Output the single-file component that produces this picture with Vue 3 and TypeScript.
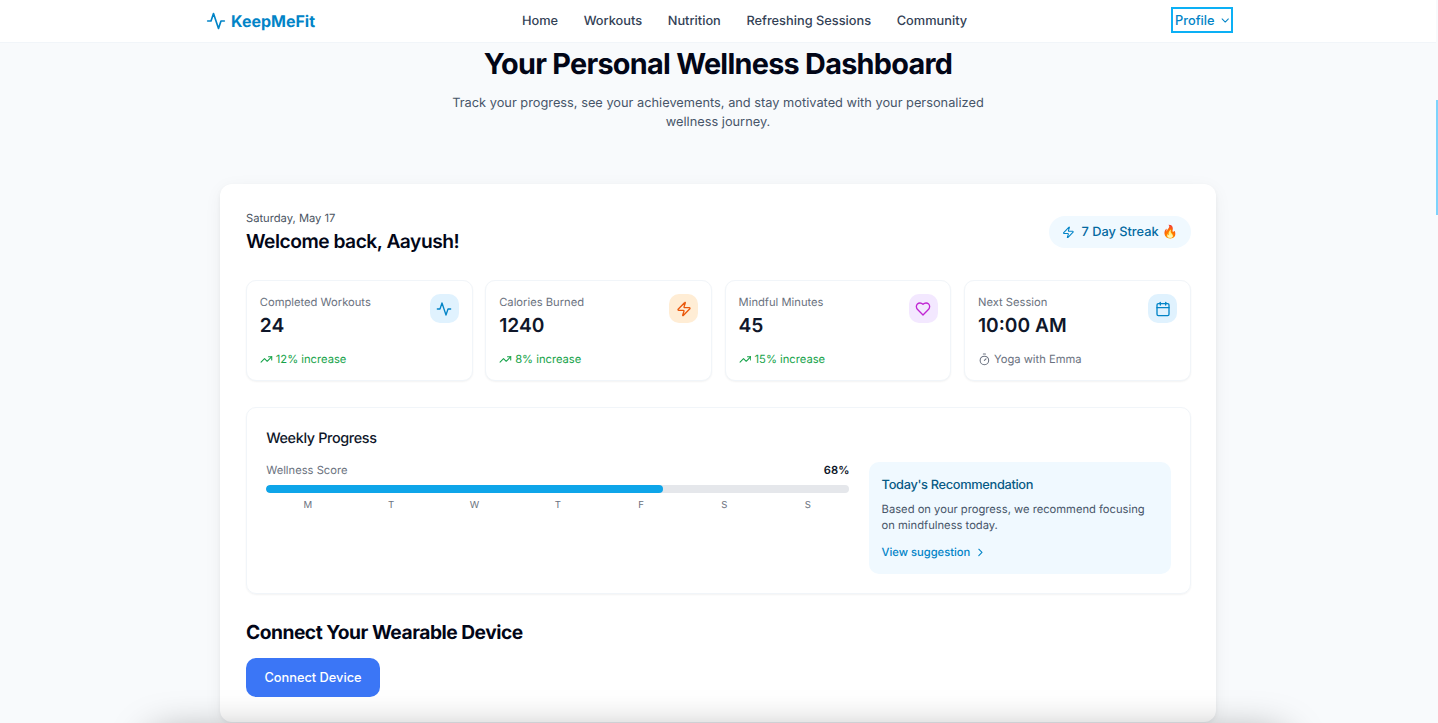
<template>
  <div class="page">
    <header class="nav">
      <div class="nav-inner">
        <a class="logo">
          <svg class="logo-icon" viewBox="0 0 24 24" fill="none" stroke="currentColor" stroke-width="2" stroke-linecap="round" stroke-linejoin="round">
            <path d="M22 12h-4l-3 9L9 3l-3 9H2" />
          </svg>
          KeepMeFit
        </a>
        <nav class="links">
          <a v-for="link in links" :key="link">{{ link }}</a>
        </nav>
        <button class="profile">
          Profile
          <svg viewBox="0 0 24 24" fill="none" stroke="currentColor" stroke-width="2" stroke-linecap="round" stroke-linejoin="round">
            <path d="m6 9 6 6 6-6" />
          </svg>
        </button>
      </div>
    </header>

    <section class="hero">
      <h1>Your Personal Wellness Dashboard</h1>
      <p>Track your progress, see your achievements, and stay motivated with your personalized wellness journey.</p>
    </section>

    <main class="card">
      <div class="welcome">
        <div>
          <div class="date">Saturday, May 17</div>
          <h2>Welcome back, Aayush!</h2>
        </div>
        <div class="streak">
          <svg viewBox="0 0 24 24" fill="none" stroke="currentColor" stroke-width="2" stroke-linecap="round" stroke-linejoin="round">
            <path d="M4 14a1 1 0 0 1-.78-1.63l9.9-10.2a.5.5 0 0 1 .86.46l-1.92 6.02A1 1 0 0 0 13 10h7a1 1 0 0 1 .78 1.63l-9.9 10.2a.5.5 0 0 1-.86-.46l1.92-6.02A1 1 0 0 0 11 14z" />
          </svg>
          <span>7 Day Streak 🔥</span>
        </div>
      </div>

      <div class="stats">
        <div v-for="stat in stats" :key="stat.label" class="stat">
          <div class="stat-top">
            <div>
              <div class="stat-label">{{ stat.label }}</div>
              <div class="stat-value">{{ stat.value }}</div>
            </div>
            <div class="stat-icon" :class="stat.tone">
              <svg viewBox="0 0 24 24" fill="none" stroke="currentColor" stroke-width="2" stroke-linecap="round" stroke-linejoin="round">
                <path v-for="d in stat.icon" :key="d" :d="d" />
              </svg>
            </div>
          </div>
          <div class="stat-foot" :class="{ up: stat.up }">
            <svg v-if="stat.up" viewBox="0 0 24 24" fill="none" stroke="currentColor" stroke-width="2" stroke-linecap="round" stroke-linejoin="round">
              <path d="M22 7 13.5 15.5l-5-5L2 17" />
              <path d="M16 7h6v6" />
            </svg>
            <svg v-else viewBox="0 0 24 24" fill="none" stroke="currentColor" stroke-width="2" stroke-linecap="round" stroke-linejoin="round">
              <path d="M10 2h4" />
              <path d="m12 14 3-3" />
              <circle cx="12" cy="14" r="8" />
            </svg>
            {{ stat.foot }}
          </div>
        </div>
      </div>

      <div class="progress-card">
        <h3>Weekly Progress</h3>
        <div class="progress-body">
          <div class="score">
            <div class="score-head">
              <span>Wellness Score</span>
              <strong>{{ score }}%</strong>
            </div>
            <div class="track">
              <div class="fill" :style="{ width: score + '%' }"></div>
            </div>
            <div class="days">
              <span v-for="(day, i) in days" :key="i">{{ day }}</span>
            </div>
          </div>
          <aside class="rec">
            <h4>Today's Recommendation</h4>
            <p>Based on your progress, we recommend focusing on mindfulness today.</p>
            <a>
              View suggestion
              <svg viewBox="0 0 24 24" fill="none" stroke="currentColor" stroke-width="2" stroke-linecap="round" stroke-linejoin="round">
                <path d="m9 18 6-6-6-6" />
              </svg>
            </a>
          </aside>
        </div>
      </div>

      <h2 class="connect-title">Connect Your Wearable Device</h2>
      <button class="connect">Connect Device</button>
    </main>

    <!-- next section sits below the fold, only its shadow shows -->
    <div class="fold-shadow"></div>
    <div class="scroll-thumb"></div>
  </div>
</template>

<script setup lang="ts">
interface Stat {
  label: string;
  value: string;
  tone: string;
  icon: string[];
  foot: string;
  up: boolean;
}

const links = ['Home', 'Workouts', 'Nutrition', 'Refreshing Sessions', 'Community'];
const days = ['M', 'T', 'W', 'T', 'F', 'S', 'S'];
const score = 68;

const bolt = 'M4 14a1 1 0 0 1-.78-1.63l9.9-10.2a.5.5 0 0 1 .86.46l-1.92 6.02A1 1 0 0 0 13 10h7a1 1 0 0 1 .78 1.63l-9.9 10.2a.5.5 0 0 1-.86-.46l1.92-6.02A1 1 0 0 0 11 14z';
const heart = 'M19 14c1.49-1.46 3-3.21 3-5.5A5.5 5.5 0 0 0 16.5 3c-1.76 0-3 .5-4.5 2-1.5-1.5-2.74-2-4.5-2A5.5 5.5 0 0 0 2 8.5c0 2.3 1.5 4.05 3 5.5l7 7Z';

const stats: Stat[] = [
  { label: 'Completed Workouts', value: '24', tone: 'sky', icon: ['M22 12h-4l-3 9L9 3l-3 9H2'], foot: '12% increase', up: true },
  { label: 'Calories Burned', value: '1240', tone: 'orange', icon: [bolt], foot: '8% increase', up: true },
  { label: 'Mindful Minutes', value: '45', tone: 'purple', icon: [heart], foot: '15% increase', up: true },
  {
    label: 'Next Session',
    value: '10:00 AM',
    tone: 'sky',
    icon: ['M8 2v4', 'M16 2v4', 'M5 4h14a2 2 0 0 1 2 2v14a2 2 0 0 1-2 2H5a2 2 0 0 1-2-2V6a2 2 0 0 1 2-2Z', 'M3 10h18'],
    foot: 'Yoga with Emma',
    up: false,
  },
];
</script>

<style>
html,
body {
  margin: 0;
  height: 723px;
  overflow: hidden;
  background: #f8fafc;
}
</style>

<style scoped>
.page {
  position: relative;
  box-sizing: border-box;
  height: 723px;
  padding-right: 2px;
  overflow: hidden;
  background: #f8fafc;
  font-family: Inter, "Liberation Sans", sans-serif;
  text-rendering: geometricPrecision;
  color: #0f172a;
}

.nav {
  height: 42px;
  background: #fff;
  border-bottom: 1px solid #f1f5f9;
}

.nav-inner {
  width: 1024px;
  height: 100%;
  margin: 0 auto;
  display: flex;
  align-items: center;
  justify-content: space-between;
}

.logo {
  display: flex;
  align-items: center;
  gap: 5px;
  color: #0284c7;
  font-size: 16px;
  font-weight: 700;
}

.logo-icon {
  width: 20px;
  height: 20px;
}

.links {
  display: flex;
  gap: 25.6px;
  font-size: 12.8px;
  font-weight: 500;
  color: #334155;
  margin-left: 1px;
}

.profile {
  display: flex;
  align-items: center;
  gap: 4px;
  width: 58px;
  height: 22px;
  margin: 0 -1px 2px 0;
  padding: 0 0 0 2px;
  background: #fff;
  border: none;
  outline: 2px solid #0cb0f5;
  color: #0284c7;
  font: 500 12.8px Inter, "Liberation Sans", sans-serif;
}

.profile svg {
  width: 13px;
  height: 13px;
}

.hero {
  padding-top: 1px;
  text-align: center;
}

.hero h1 {
  margin: 0;
  font-size: 28.8px;
  line-height: 40px;
  font-weight: 700;
  letter-spacing: -0.72px;
  color: #020617;
}

.hero p {
  width: 560px;
  margin: 10px auto 0;
  font-size: 12.8px;
  line-height: 19.2px;
  color: #475569;
}

.card {
  box-sizing: border-box;
  width: 996.8px;
  height: 538px;
  margin: 52px auto 0;
  padding: 26px 25.6px 26px 26.4px;
  background: #fff;
  border-radius: 12px;
  box-shadow: 0 2px 4px rgba(15, 23, 42, 0.05), 0 4px 18px rgba(15, 23, 42, 0.05);
}

.welcome {
  display: flex;
  justify-content: space-between;
  align-items: center;
}

.date {
  font-size: 11.2px;
  line-height: 17px;
  color: #4b5563;
}

h2 {
  margin: 0;
  font-size: 19.2px;
  line-height: 28px;
  font-weight: 600;
  letter-spacing: -0.48px;
  color: #020617;
}

.streak {
  display: flex;
  align-items: center;
  gap: 7px;
  height: 32px;
  margin-top: -2px;
  padding: 0 12.8px;
  border-radius: 16px;
  background: #f0f9ff;
  color: #0369a1;
  font-size: 12.8px;
  font-weight: 500;
}

.streak span {
  position: relative;
  top: 0.5px;
}

.streak svg {
  width: 12.8px;
  height: 12.8px;
  color: #0284c7;
}

.stats {
  display: grid;
  grid-template-columns: repeat(4, 1fr);
  gap: 12.8px;
  margin-top: 25px;
}

.stat {
  box-sizing: border-box;
  height: 101px;
  padding: 12.8px;
  background: #fff;
  border: 1px solid #f1f5f9;
  border-radius: 10px;
  box-shadow: 0 1px 2px rgba(0, 0, 0, 0.05);
}

.stat-top {
  display: flex;
  justify-content: space-between;
  align-items: flex-start;
}

.stat-label {
  font-size: 11.2px;
  line-height: 16px;
  color: #6b7280;
}

.stat-value {
  font-size: 19.2px;
  line-height: 30px;
  font-weight: 600;
  color: #0f172a;
}

.stat-icon {
  width: 29px;
  height: 29px;
  border-radius: 10px;
  display: flex;
  align-items: center;
  justify-content: center;
}

.stat-icon svg {
  width: 16px;
  height: 16px;
}

.sky {
  background: #e0f2fe;
  color: #0284c7;
}

.orange {
  background: #ffedd5;
  color: #ea580c;
}

.purple {
  background: #f3e8ff;
  color: #c026d3;
}

.stat-foot {
  display: flex;
  align-items: center;
  gap: 3.2px;
  margin-top: 11px;
  font-size: 11.2px;
  line-height: 16px;
  color: #6b7280;
}

.stat-foot.up {
  color: #16a34a;
}

.stat-foot svg {
  width: 12.8px;
  height: 12.8px;
}

.progress-card {
  box-sizing: border-box;
  height: 187px;
  margin-top: 26px;
  padding: 21px 19.2px 19px;
  border: 1px solid #f1f5f9;
  border-radius: 10px;
  box-shadow: 0 1px 2px rgba(0, 0, 0, 0.05);
}

h3 {
  margin: 0;
  font-size: 14.4px;
  line-height: 20px;
  font-weight: 500;
  letter-spacing: -0.36px;
  color: #0f172a;
}

.progress-body {
  display: flex;
  gap: 19.2px;
  margin-top: 13px;
}

.score {
  flex: 1;
}

.score-head {
  display: flex;
  justify-content: space-between;
  font-size: 11.2px;
  line-height: 16px;
  color: #6b7280;
}

.score-head strong {
  font-weight: 600;
  color: #0f172a;
}

.track {
  height: 8px;
  margin-top: 7px;
  border-radius: 4px;
  background: #e5e7eb;
  overflow: hidden;
}

.fill {
  height: 100%;
  border-radius: 4px;
  background: #0ea5e9;
}

.days {
  display: grid;
  grid-template-columns: repeat(7, 1fr);
  margin-top: 6px;
  font-size: 9.6px;
  line-height: 13px;
  text-align: center;
  color: #6b7280;
}

.rec {
  box-sizing: border-box;
  width: 302px;
  height: 112px;
  padding: 14px 13px 12px;
  border-radius: 10px;
  background: #f0f9ff;
}

.rec h4 {
  margin: 0;
  font-size: 12.8px;
  line-height: 19px;
  font-weight: 500;
  letter-spacing: -0.32px;
  color: #075985;
}

.rec p {
  margin: 6px 0 0;
  font-size: 11.2px;
  line-height: 16px;
  color: #475569;
}

.rec a {
  display: flex;
  align-items: center;
  gap: 4px;
  margin-top: 11px;
  font-size: 11.2px;
  font-weight: 500;
  line-height: 16px;
  color: #0284c7;
}

.rec a svg {
  width: 12.8px;
  height: 12.8px;
}

.connect-title {
  margin-top: 24px;
  font-weight: 700;
}

.connect {
  display: block;
  width: 134px;
  height: 39px;
  margin-top: 12px;
  border: none;
  border-radius: 10px;
  background: #3b76f6;
  color: #fff;
  font: 500 12.8px Inter, "Liberation Sans", sans-serif;
}

.fold-shadow {
  position: absolute;
  top: 735px;
  left: 150px;
  width: 1136px;
  height: 100px;
  border-radius: 16px;
  box-shadow: 0 0 40px rgba(0, 0, 0, 0.4);
}

.scroll-thumb {
  position: absolute;
  top: 100px;
  right: 0;
  width: 2px;
  height: 115px;
  background: #7dd3fc;
}
</style>
